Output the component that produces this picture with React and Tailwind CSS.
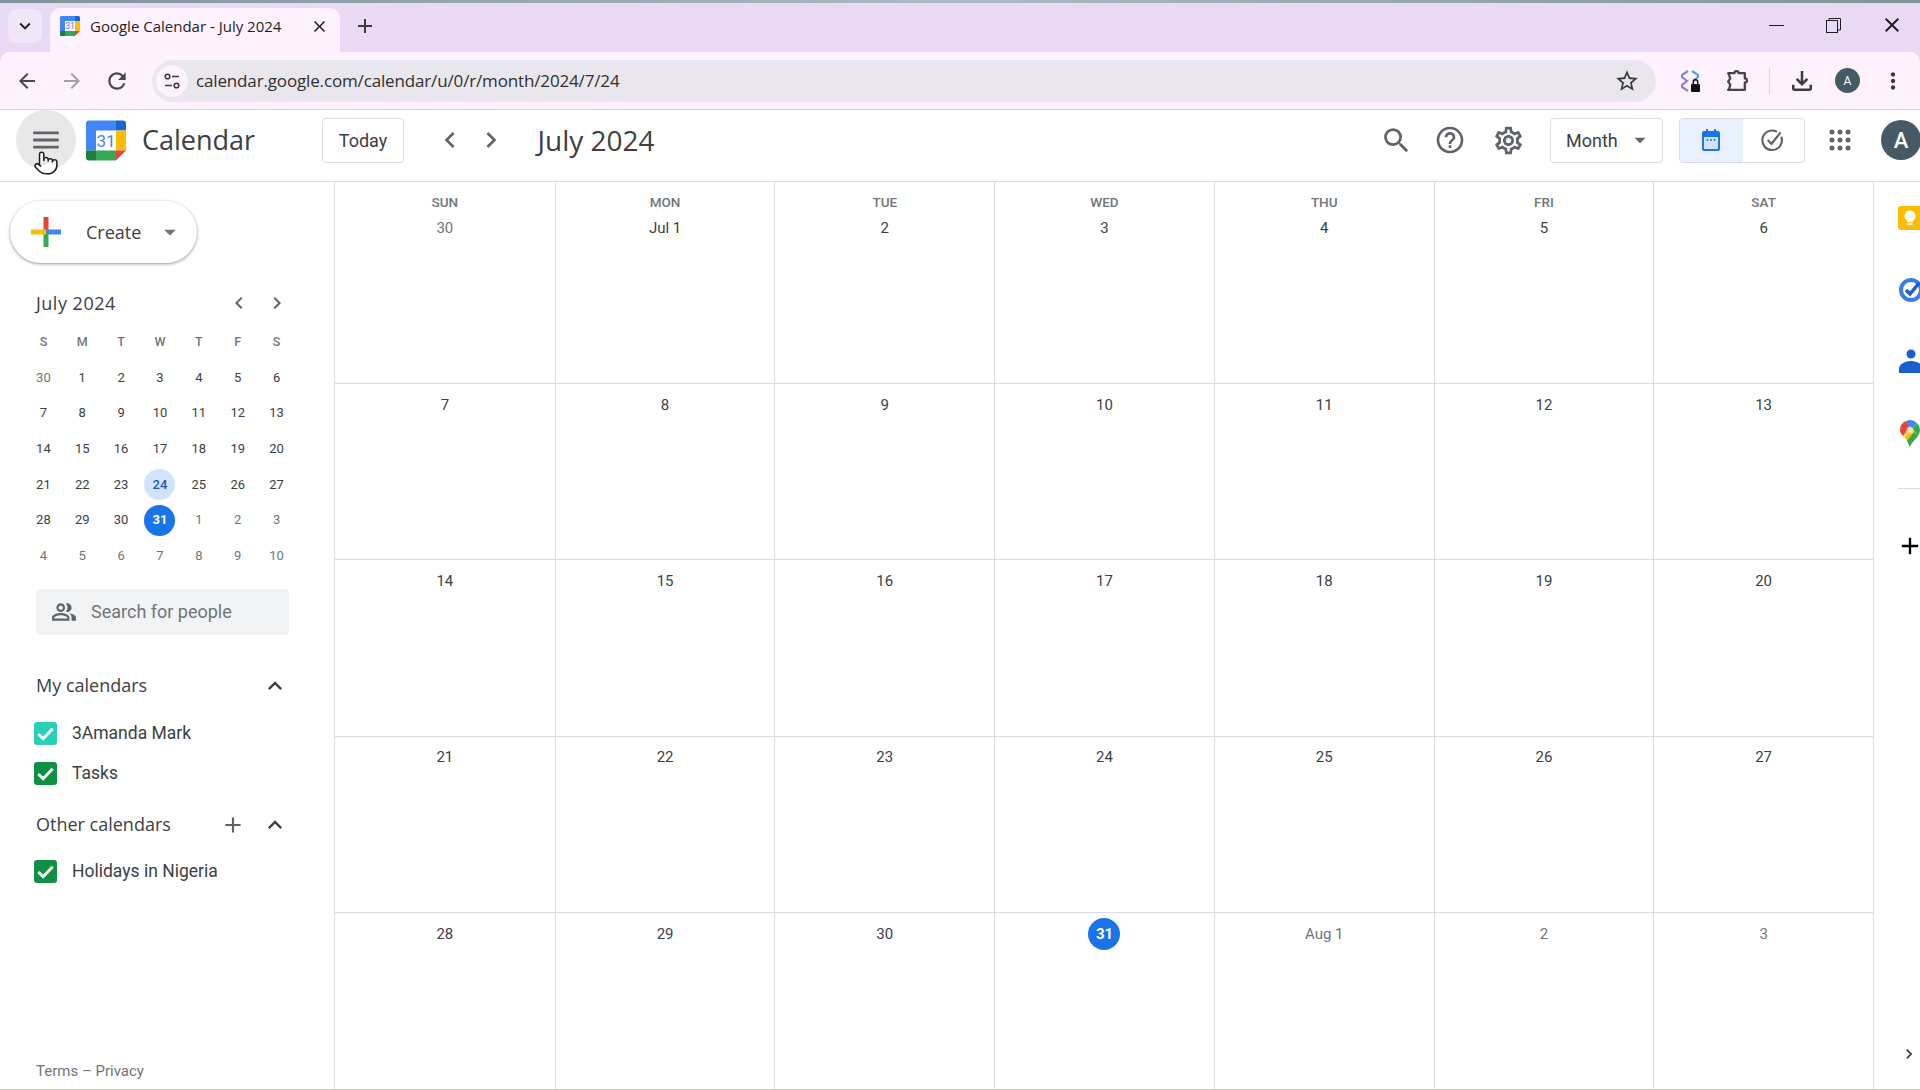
import React from 'react';
import { Pointer } from 'lucide-react';
import {
  MdAdd, MdArrowBack, MdArrowDropDown, MdArrowForward, MdCheck, MdChevronLeft, MdChevronRight,
  MdClose, MdExpandLess, MdExpandMore, MdHelpOutline, MdMenu, MdMoreVert, MdOutlinePeopleAlt,
  MdOutlineSettings, MdRefresh, MdSearch, MdStarBorder, MdOutlineFileDownload,
} from 'react-icons/md';

const weekDays = ['SUN', 'MON', 'TUE', 'WED', 'THU', 'FRI', 'SAT'];

// month grid, muted = outside of July
const monthRows = [
  [['30', true], ['Jul 1'], ['2'], ['3'], ['4'], ['5'], ['6']],
  [['7'], ['8'], ['9'], ['10'], ['11'], ['12'], ['13']],
  [['14'], ['15'], ['16'], ['17'], ['18'], ['19'], ['20']],
  [['21'], ['22'], ['23'], ['24'], ['25'], ['26'], ['27']],
  [['28'], ['29'], ['30'], ['31'], ['Aug 1', true], ['2', true], ['3', true]],
];

const miniRows = [
  [30, 1, 2, 3, 4, 5, 6],
  [7, 8, 9, 10, 11, 12, 13],
  [14, 15, 16, 17, 18, 19, 20],
  [21, 22, 23, 24, 25, 26, 27],
  [28, 29, 30, 31, 1, 2, 3],
  [4, 5, 6, 7, 8, 9, 10],
];

const CalendarLogo = ({ className }) => (
  <svg viewBox="0 0 40 40" className={className}>
    <path d="M3 0h27v10H10v20H0V3a3 3 0 0 1 3-3z" fill="#4285f4" />
    <path d="M30 0h7a3 3 0 0 1 3 3v7H30z" fill="#1967d2" />
    <rect x="30" y="10" width="10" height="20" fill="#fbbc04" />
    <rect x="10" y="30" width="20" height="10" fill="#34a853" />
    <path d="M0 30h10v10H3a3 3 0 0 1-3-3z" fill="#188038" />
    <path d="M30 30h10L30 40z" fill="#ea4335" />
    <text x="20" y="26" textAnchor="middle" fontSize="17" fontFamily="Roboto, sans-serif" fill="#4285f4">31</text>
  </svg>
);

const CheckRow = ({ color, label, className }) => (
  <div className={`flex h-[40px] items-center pl-[34px] ${className || ''}`}>
    <div className={`flex h-[23px] w-[23px] items-center justify-center rounded-[3px] ${color}`}>
      <svg viewBox="0 0 24 24" className="h-[23px] w-[23px]" fill="none" stroke="#fff" strokeWidth="3">
        <path d="M4.500 12.500l5 5L19.500 7" />
      </svg>
    </div>
    <span className="ml-[15px] text-[17.5px] text-[#3c4043]">{label}</span>
  </div>
);

const MiniCalendar = () => (
  <div className="ml-[24px] mt-[3px] w-[272px] text-[13px] text-[#3c4043]">
    <div className="grid grid-cols-7">
      {['S', 'M', 'T', 'W', 'T', 'F', 'S'].map((d, i) => (
        <div key={i} className="flex h-[35.67px] items-center justify-center pt-[2px] text-[12.5px] font-medium text-[#70757a]">{d}</div>
      ))}
      {miniRows.map((row, r) =>
        row.map((d, c) => {
          const muted = (r === 0 && d === 30) || r === 5 || (r === 4 && d < 10);
          let style = muted ? 'text-[#70757a]' : '';
          if (r === 3 && d === 24) style = 'rounded-full bg-[#d2e3fc] font-medium text-[#185abc]';
          if (r === 4 && d === 31) style = 'rounded-full bg-[#1a73e8] font-bold text-white';
          return (
            <div key={`${r}-${c}`} className="flex h-[35.67px] items-center justify-center">
              <span className={`flex h-[31px] w-[31px] items-center justify-center ${style}`}>{d}</span>
            </div>
          );
        })
      )}
    </div>
  </div>
);

const Sidebar = () => (
  <aside className="flex w-[335px] shrink-0 flex-col border-r border-[#dadce0]">
    <div className="ml-[10px] mt-[19px] flex h-[62px] w-[187px] items-center rounded-full bg-white shadow-[0_1px_3px_1px_rgba(60,64,67,0.2),0_1px_2px_rgba(60,64,67,0.3)]">
      <svg viewBox="0 0 30 30" className="ml-[21px] h-[30px] w-[30px]">
        <rect x="12.5" y="0" width="5" height="15" fill="#ea4335" />
        <rect x="15" y="12.5" width="15" height="5" fill="#4285f4" />
        <rect x="12.5" y="15" width="5" height="15" fill="#34a853" />
        <rect x="0" y="12.5" width="15" height="5" fill="#fbbc05" />
      </svg>
      <span className="ml-[25px] font-['Open_Sans',sans-serif] text-[18px] text-[#3c4043]">Create</span>
      <MdArrowDropDown className="ml-[15px] text-[#70757a]" size={28} />
    </div>

    <div className="ml-[36px] mt-[22px] flex h-[36px] w-[260px] items-center">
      <span className="font-['Open_Sans',sans-serif] text-[18px] tracking-[0.5px] text-[#3c4043]">July 2024</span>
      <MdChevronLeft className="ml-auto text-[#5f6368]" size={24} />
      <MdChevronRight className="ml-[14px] mr-[7px] text-[#5f6368]" size={24} />
    </div>

    <MiniCalendar />

    <div className="ml-[36px] mt-[15px] flex h-[46px] w-[253px] items-center rounded bg-[#f1f3f4]">
      <MdOutlinePeopleAlt className="ml-[15px] text-[#5f6368]" size={26} />
      <span className="ml-[14px] text-[18px] text-[#70757a]">Search for people</span>
    </div>

    <div className="ml-[36px] mt-[33px] flex h-[36px] w-[253px] items-center justify-between">
      <span className="font-['Open_Sans',sans-serif] text-[18px] font-medium text-[#3c4043]">My calendars</span>
      <MdExpandLess className="text-[#3c4043]" size={28} />
    </div>
    <CheckRow className="mt-[10px]" color="bg-[#2bcfb5]" label="3Amanda Mark" />
    <CheckRow color="bg-[#0f9145]" label="Tasks" />

    <div className="ml-[36px] mt-[13px] flex h-[36px] w-[253px] items-center">
      <span className="font-['Open_Sans',sans-serif] text-[18px] font-medium text-[#3c4043]">Other calendars</span>
      <MdAdd className="ml-auto text-[#5f6368]" size={26} />
      <MdExpandLess className="ml-[15px] text-[#3c4043]" size={28} />
    </div>
    <CheckRow className="mt-[9px]" color="bg-[#0f9145]" label="Holidays in Nigeria" />

    <div className="mb-[8px] ml-[36px] mt-auto h-[20px] text-[15px] leading-[20px] text-[#70757a]">Terms – Privacy</div>
  </aside>
);

const MonthGrid = () => (
  <main className="grid min-w-0 flex-1 grid-cols-7 grid-rows-[202px_repeat(4,176.25px)]">
    {monthRows.map((row, r) =>
      row.map(([label, muted], c) => (
        <div
          key={`${r}-${c}`}
          className={`flex flex-col items-center border-[#dadce0] ${c > 0 ? 'border-l' : ''} ${r < 4 ? 'border-b' : ''} ${r === 0 ? 'pt-[11px]' : 'pt-[5px]'}`}
        >
          {r === 0 && <div className="mb-[1px] h-[18px] text-[13.5px] font-medium leading-[18px] text-[#70757a]">{weekDays[c]}</div>}
          {label === '31' ? (
            <div className="flex h-[32px] w-[32px] items-center justify-center rounded-full bg-[#1a73e8] text-[15px] font-bold text-white">{label}</div>
          ) : (
            <div className={`flex h-[32px] items-center text-[15px] ${muted ? 'text-[#70757a]' : 'text-[#3c4043]'}`}>{label}</div>
          )}
        </div>
      ))
    )}
  </main>
);

const SidePanel = () => (
  <div className="flex w-[47px] shrink-0 flex-col overflow-hidden border-l border-[#dadce0] pl-[24px]">
    <div className="mt-[24px] flex h-[24px] w-[24px] shrink-0 items-center justify-center rounded-[3px] bg-[#fbbc04]">
      <svg viewBox="0 0 24 24" className="h-[20px] w-[20px]">
        <path d="M12 3a6.5 6.5 0 0 0-3.5 12v2h7v-2A6.5 6.5 0 0 0 12 3z" fill="#fff" />
        <rect x="9" y="18.5" width="6" height="2" fill="#fff" />
      </svg>
    </div>
    <svg viewBox="0 0 28 28" className="mt-[45px] h-[28px] w-[28px] shrink-0">
      <circle cx="13" cy="15" r="10" fill="none" stroke="#3a7de6" strokeWidth="4" />
      <path d="M8 15l4 4 9-11" fill="none" stroke="#1a5fd0" strokeWidth="3.5" />
    </svg>
    <svg viewBox="0 0 28 28" className="mt-[44px] h-[28px] w-[28px] shrink-0">
      <circle cx="13" cy="7" r="4.5" fill="#1a5fd0" />
      <path d="M1 26v-4c0-5 6-8 12-8s12 3 12 8v4z" fill="#1a5fd0" />
    </svg>
    <svg viewBox="0 0 24 30" className="mt-[43px] h-[30px] w-[24px] shrink-0">
      <path d="M2 12a10 10 0 0 1 6-9l4 5-7 10c-2-2-3-4-3-6z" fill="#ea4335" />
      <path d="M8 3a10 10 0 0 1 11 2l-5 6-4-3z" fill="#4285f4" />
      <path d="M19 5a10 10 0 0 1 3 7c0 2-1 4-2 6l-6-7z" fill="#34a853" />
      <path d="M5 18l7-9 2 2-9 8zM6 19l9-8 5 7c-3 4-7 7-8 11-1-4-3-7-6-10z" fill="#fbbc04" />
      <path d="M20 18c-3 4-7 7-8 11-1-2-1.500-3-3-6l7-9z" fill="#34a853" />
      <circle cx="12" cy="12" r="3.500" fill="#fff" opacity="0.5" />
    </svg>
    <div className="mt-[40px] h-px w-[24px] shrink-0 bg-[#dadce0]" />
    <MdAdd className="ml-[-2px] mt-[43px] shrink-0 text-black" size={28} />
    <MdChevronRight className="mb-[25px] ml-[1px] mt-auto shrink-0 text-[#3c4043]" size={20} />
  </div>
);

const BrowserChrome = () => (
  <div className="h-[110px] shrink-0 bg-[#e8daf4]">
    <div className="h-[3px] bg-gradient-to-r from-[#7f939b] via-[#a9bcc5] to-[#7f939b]" />
    <div className="flex h-[49px] items-start font-['Open_Sans',sans-serif]">
      <div className="ml-[8px] mt-[6px] flex h-[34px] w-[34px] items-center justify-center rounded-lg bg-[#f1e6f8]">
        <MdExpandMore className="text-[#1f1f1f]" size={22} />
      </div>
      <div className="ml-[8px] mt-[5px] flex h-[44px] w-[290px] items-center rounded-t-[10px] bg-[#fdf2fd] pb-[8px]">
        <CalendarLogo className="ml-[10px] h-[20px] w-[20px]" />
        <span className="ml-[10px] w-[220px] whitespace-nowrap text-[15px] text-[#1f1f1f]">Google Calendar - July 2024</span>
        <MdClose className="text-[#1f1f1f]" size={19} />
      </div>
      <MdAdd className="ml-[13px] mt-[11px] text-[#3c3c3c]" size={24} />
      <div className="ml-auto flex h-[44px] items-center">
        <div className="h-px w-[15px] bg-[#1f1f1f]" />
        <svg viewBox="0 0 15 15" className="ml-[42px] h-[15px] w-[15px]" fill="none" stroke="#1f1f1f">
          <rect x="0.500" y="2.500" width="11" height="12" />
          <path d="M3 2.500V0.500h11.500v11.500h-3" />
        </svg>
        <MdClose className="ml-[39px] mr-[16px] text-[#1f1f1f]" size={24} />
      </div>
    </div>
    <div className="flex h-[58px] items-center rounded-t-[10px] border-b border-[#dcd6de] bg-[#fdf2fd] pl-[4.5px]">
      <div className="flex h-[45px] w-[45px] items-center justify-center"><MdArrowBack className="text-[#474747]" size={24} /></div>
      <div className="flex h-[45px] w-[45px] items-center justify-center"><MdArrowForward className="text-[#a5a0a8]" size={24} /></div>
      <div className="flex h-[45px] w-[45px] items-center justify-center"><MdRefresh className="text-[#474747]" size={26} /></div>
      <div className="ml-[12.5px] flex h-[42px] w-[1504px] items-center rounded-full bg-[#eae6ee]">
        <div className="ml-[4px] flex h-[32px] w-[32px] items-center justify-center rounded-full bg-[#fdf2fd]">
          <svg viewBox="0 0 18 18" className="h-[18px] w-[18px]" fill="none" stroke="#3c3c3c" strokeWidth="1.6">
            <circle cx="4.500" cy="4.500" r="2.300" />
            <path d="M9 4.500h7M2 13.500h7" />
            <circle cx="13.500" cy="13.500" r="2.300" />
          </svg>
        </div>
        <span className="ml-[8px] font-['Open_Sans',sans-serif] text-[17px] tracking-[-0.15px] text-[#303030]">calendar.google.com/calendar/u/0/r/month/2024/7/24</span>
        <MdStarBorder className="ml-auto mr-[16px] text-[#3c3c3c]" size={26} />
      </div>
      <div className="ml-[11px] flex h-[46px] w-[46px] items-center justify-center">
        <svg viewBox="0 0 24 24" className="h-[24px] w-[24px]" fill="none" strokeWidth="2.200">
          <path d="M10 2L4 6v2l5 4-5 4v2l6 4" stroke="#8f7be0" />
          <path d="M14 2l6 4v2l-5 4" stroke="#5b9be8" />
          <rect x="13" y="15" width="9" height="8" rx="1" fill="#111" stroke="none" />
          <path d="M15.300 15v-2a2.200 2.200 0 0 1 4.400 0v2" stroke="#111" strokeWidth="1.500" />
        </svg>
      </div>
      <div className="flex h-[46px] w-[46px] items-center justify-center">
        <svg viewBox="0 0 24 24" className="h-[25px] w-[25px]" fill="none" stroke="#47424e" strokeWidth="2.200" strokeLinejoin="round">
          <path d="M4 5h6a2 2 0 0 1 4 0h6v5a2 2 0 0 1 0 4v7H4l1-1 1-4-2-3 2-3-1-3z" />
        </svg>
      </div>
      <div className="ml-[10px] h-[26px] w-px bg-[#dcd3e2]" />
      <div className="ml-[9px] flex h-[46px] w-[46px] items-center justify-center"><MdOutlineFileDownload className="text-[#3c3c3c]" size={30} /></div>
      <div className="flex h-[46px] w-[45px] items-center justify-center">
        <div className="flex h-[25px] w-[25px] items-center justify-center rounded-full bg-[#455a64] text-[12px] text-white">A</div>
      </div>
      <div className="flex h-[46px] w-[46px] items-center justify-center"><MdMoreVert className="text-[#3c3c3c]" size={26} /></div>
    </div>
  </div>
);

const CalendarHeader = () => (
  <header className="flex h-[72px] shrink-0 items-start overflow-hidden border-b border-[#dadce0] bg-white">
    <div className="flex h-[60px] w-full items-center">
      <div className="ml-[16px] flex h-[60px] w-[60px] shrink-0 items-center justify-center rounded-full bg-[#e8e8e8]">
        <MdMenu className="text-[#5f6368]" size={34} />
      </div>
      <CalendarLogo className="ml-[10px] h-[41px] w-[40px] shrink-0" />
      <span className="ml-[16px] w-[180px] shrink-0 font-['Open_Sans',sans-serif] text-[27px] text-[#3c4043]">Calendar</span>
      <div className="flex h-[45px] w-[82px] shrink-0 items-center justify-center rounded border border-[#dadce0] text-[18px] text-[#3c4043]">Today</div>
      <div className="ml-[25.5px] flex h-[41px] w-[41px] shrink-0 items-center justify-center"><MdChevronLeft className="text-[#5f6368]" size={32} /></div>
      <div className="flex h-[41px] w-[41px] shrink-0 items-center justify-center"><MdChevronRight className="text-[#5f6368]" size={32} /></div>
      <span className="ml-[26px] whitespace-nowrap font-['Open_Sans',sans-serif] text-[28px] text-[#3c4043]">July 2024</span>
      <div className="flex-1" />
      <div className="flex h-[46px] w-[46px] shrink-0 items-center justify-center"><MdSearch className="text-[#5f6368]" size={33} /></div>
      <div className="ml-[8px] flex h-[46px] w-[46px] shrink-0 items-center justify-center"><MdHelpOutline className="text-[#5f6368]" size={32} /></div>
      <div className="ml-[12px] flex h-[46px] w-[46px] shrink-0 items-center justify-center"><MdOutlineSettings className="text-[#5f6368]" size={33} /></div>
      <div className="ml-[19px] flex h-[45px] w-[113px] shrink-0 items-center rounded border border-[#dadce0] pl-[15px] text-[18px] text-[#3c4043]">
        Month
        <MdArrowDropDown className="ml-[9px] text-[#5f6368]" size={26} />
      </div>
      <div className="ml-[16px] flex h-[45px] w-[126px] shrink-0 overflow-hidden rounded border border-[#dadce0]">
        <div className="flex w-[63px] items-center justify-center bg-[#e8f0fe] pr-[2px]">
          <svg viewBox="0 0 24 24" className="h-[24px] w-[24px]">
            <path d="M5 3h2V1h2v2h6V1h2v2h2a2 2 0 0 1 2 2v16a2 2 0 0 1-2 2H5a2 2 0 0 1-2-2V5a2 2 0 0 1 2-2zm0 6v12h14V9z" fill="#1a73e8" />
            <rect x="5" y="9" width="14" height="12" fill="#d2e3fc" />
            <circle cx="8.500" cy="12" r="1" fill="#1a73e8" />
            <circle cx="12" cy="12" r="1" fill="#1a73e8" />
            <circle cx="15.500" cy="12" r="1" fill="#1a73e8" />
          </svg>
        </div>
        <div className="flex flex-1 items-center justify-center pr-[3px]">
          <svg viewBox="0 0 24 24" className="h-[26px] w-[26px]" fill="none" stroke="#5f6368" strokeWidth="2">
            <path d="M20.500 9a9 9 0 1 1-4-4.600" />
            <path d="M8 12l3.500 3.500L20 5" />
          </svg>
        </div>
      </div>
      <div className="ml-[12px] flex h-[46px] w-[46px] shrink-0 items-center justify-center">
        <svg viewBox="0 0 24 24" className="h-[24px] w-[24px]" fill="#5f6368">
          {[4, 12, 20].map((cy) => [4, 12, 20].map((cx) => <circle key={`${cx}-${cy}`} cx={cx} cy={cy} r="2.500" />))}
        </svg>
      </div>
      <div className="ml-[18px] mr-[-1px] flex h-[40px] w-[40px] shrink-0 items-center justify-center rounded-full bg-[#455a64] text-[22px] font-medium text-white">A</div>
    </div>
  </header>
);

export default function App() {
  return (
    <div className="relative flex h-[1090px] w-[1920px] flex-col overflow-hidden bg-white font-['Roboto',sans-serif]">
      <BrowserChrome />
      <CalendarHeader />
      <div className="flex min-h-0 flex-1 border-b border-[#c9c9bb]">
        <Sidebar />
        <MonthGrid />
        <SidePanel />
      </div>
      <Pointer className="absolute left-[33px] top-[150px] fill-white text-[#222]" size={26} strokeWidth={1.4} />
    </div>
  );
}
